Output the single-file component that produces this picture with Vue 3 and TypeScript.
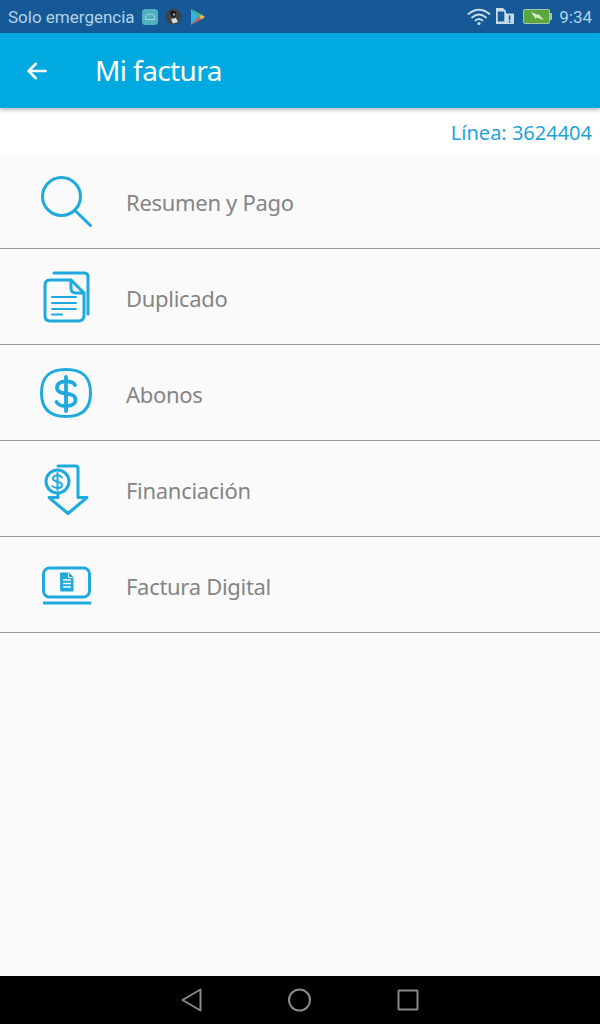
<script setup lang="ts">
const items: { key: string; label: string }[] = [
  { key: 'search', label: 'Resumen y Pago' },
  { key: 'copy', label: 'Duplicado' },
  { key: 'dollar', label: 'Abonos' },
  { key: 'finance', label: 'Financiación' },
  { key: 'digital', label: 'Factura Digital' },
]
</script>

<template>
  <div class="screen">
    <header class="status">
      <div class="status-left">
        <span class="status-text">Solo emergencia</span>
        <svg class="ic-a" width="16" height="16" viewBox="0 0 16 16">
          <rect width="16" height="16" rx="3.5" fill="#4fb0c0" />
          <path d="M3.5 10.5 V8.5 A4.5 3.5 0 0 1 12.5 8.5 V10.5 Z" fill="none" stroke="#a9d6df" stroke-width="1" />
        </svg>
        <svg class="ic-b" width="17" height="17" viewBox="0 0 17 17">
          <circle cx="8.5" cy="8.5" r="8" fill="#3c4248" />
          <path d="M5 4 Q8 1.5 11 4 L10.5 9 L7 9 Z" fill="#14171a" />
          <path d="M6 11 L11 10 L13 14 L8 15.5 Z" fill="#d9dcdf" />
          <circle cx="9" cy="6.5" r="1.2" fill="#9aa0a6" />
        </svg>
        <svg class="ic-c" width="14" height="16" viewBox="0 0 14 16">
          <path d="M0 0 L8 8 L0 16 Z" fill="#35b6d8" />
          <path d="M0 0 L10.5 5.6 L8 8 Z" fill="#4fb58a" />
          <path d="M0 16 L10.5 10.4 L8 8 Z" fill="#d9584f" />
          <path d="M10.5 5.6 L14 8 L10.5 10.4 L8 8 Z" fill="#e6b83c" />
        </svg>
      </div>
      <div class="status-right">
        <svg width="24" height="18" viewBox="0 0 24 18" fill="none" stroke="#c6dcec" stroke-width="1.8" stroke-linecap="round">
          <path d="M1.5 6 Q12 -2.5 22.5 6" />
          <path d="M5 9.5 Q12 3.5 19 9.5" />
          <path d="M8.5 12.5 Q12 9.5 15.5 12.5" />
          <circle cx="12" cy="15.5" r="1.6" fill="#c6dcec" stroke="none" />
        </svg>
        <svg width="18" height="17" viewBox="0 0 18 17">
          <path d="M0 0 H7 L10 3 V16 H0 Z" fill="#c6dcec" />
          <rect x="1.8" y="3.5" width="6.5" height="10" fill="#1a5c96" />
          <rect x="9" y="5.5" width="9" height="10.5" rx="1" fill="#c6dcec" />
          <rect x="12.8" y="7.4" width="1.6" height="4.8" fill="#1a5c96" />
          <rect x="12.8" y="13" width="1.6" height="1.6" fill="#1a5c96" />
        </svg>
        <svg class="batt" width="29" height="15" viewBox="0 0 29 15">
          <rect x="0.5" y="0.5" width="26" height="14" rx="1.5" fill="#59a83c" stroke="#a8c4b0" />
          <rect x="27" y="4" width="2" height="7" fill="#a8c4b0" />
          <path d="M8 3 L15 6 L15 4.5 L21 11 L13 8.5 L13 10.5 Z" fill="#d8e8d0" />
        </svg>
        <span class="status-text time">9:34</span>
      </div>
    </header>

    <div class="appbar">
      <svg class="back" width="24" height="24" viewBox="0 0 24 24" fill="none" stroke="#fff" stroke-width="3" stroke-linecap="round" stroke-linejoin="round">
        <path d="M22.5 12 H2.5 M11 3.5 L2.5 12 L11 20.5" transform="translate(1.5 1.8) scale(0.85)" />
      </svg>
      <h1 class="title">Mi factura</h1>
    </div>

    <div class="line-row">Línea: 3624404</div>

    <ul class="list">
      <li v-for="item in items" :key="item.key" class="row">
        <span class="icon-cell">
          <svg v-if="item.key === 'search'" width="54" height="54" viewBox="0 0 54 54" fill="none" stroke="#1fa9dc" stroke-width="3" stroke-linecap="round">
            <circle cx="21.5" cy="21.5" r="19" />
            <path d="M35.5 36 L50.5 50.5" />
          </svg>
          <svg v-else-if="item.key === 'copy'" width="54" height="54" viewBox="0 0 54 54" fill="none" stroke="#1fa9dc" stroke-width="3" stroke-linecap="round" stroke-linejoin="round">
            <path d="M14 2 H44 Q48 2 48 6 V43" />
            <path d="M10 9 H31 L44 22 V44 Q44 50 38 50 H10 Q5 50 5 45 V14 Q5 9 10 9 Z" />
            <path d="M31 9 V17 Q31 22 36 22 H44" />
            <path d="M12 26 H36 M12 32 H36 M12 38 H36" stroke-width="2" />
            <path d="M12 43.5 H22" stroke-width="2" />
          </svg>
          <svg v-else-if="item.key === 'dollar'" width="54" height="54" viewBox="0 0 54 54" fill="none" stroke="#1fa9dc" stroke-width="3">
            <path d="M26 2.5 C43 2.5 50.5 10 50.5 26 C50.5 41.5 43 49.5 26 49.5 C9 49.5 1.5 41.5 1.5 26 C1.5 10 9 2.5 26 2.5 Z" />
            <path d="M35 18 C33 13 17 12.5 17 20.5 C17 30 35.5 23 35.5 33 C35.5 41 19 40.5 16.5 35" stroke-width="3.8" stroke-linecap="round" />
            <path d="M26 10 V44" stroke-width="3.8" stroke-linecap="round" />
          </svg>
          <svg v-else-if="item.key === 'finance'" width="54" height="54" viewBox="0 0 54 54" fill="none" stroke="#1fa9dc" stroke-width="3" stroke-linecap="round" stroke-linejoin="round">
            <path d="M18 3 H36 Q38 3 38 5 V34.5 H47 L28 50.5 L9 34.5 H18 V30" />
            <circle cx="17.5" cy="18.5" r="11.5" fill="#fafafa" />
            <path d="M22 14.5 C20 11.5 13 11.5 13 15.5 C13 20 22 17.5 22 22 C22 26 14.5 25.5 12.5 23" stroke-width="2" />
            <path d="M17.5 10 V27" stroke-width="2" />
          </svg>
          <svg v-else width="54" height="54" viewBox="0 0 54 54" fill="none" stroke="#1fa9dc" stroke-linecap="round" stroke-linejoin="round">
            <rect x="3.5" y="9" width="46" height="29" rx="6" stroke-width="3" />
            <path d="M3 44 H51" stroke-width="3" stroke-linecap="butt" />
            <path d="M21 14 H29 L33 18 V32 H21 Z" fill="#1fa9dc" stroke-width="1" />
            <path d="M23.5 21 H30.5 M23.5 24.5 H30.5 M23.5 28 H30.5" stroke="#fafafa" stroke-width="1.3" />
            <path d="M28.5 14.5 V18.5 H32.5" stroke="#fafafa" stroke-width="1" />
          </svg>
        </span>
        <span class="label">{{ item.label }}</span>
      </li>
    </ul>

    <nav class="navbar">
      <svg class="nav-back" width="24" height="26" viewBox="0 0 24 26" fill="none" stroke="#8a8a8a" stroke-width="2" stroke-linejoin="round">
        <path d="M20.5 2.5 V23.5 L2.5 13 Z" />
      </svg>
      <svg width="26" height="26" viewBox="0 0 26 26" fill="none" stroke="#8a8a8a" stroke-width="2">
        <circle cx="12.5" cy="13" r="10.5" />
      </svg>
      <svg class="nav-square" width="24" height="24" viewBox="0 0 24 24" fill="none" stroke="#8a8a8a" stroke-width="2" stroke-linejoin="round">
        <rect x="2.5" y="2.5" width="19" height="19" rx="1" />
      </svg>
    </nav>
  </div>
</template>

<style>
html, body { margin: 0; padding: 0; }
</style>

<style scoped>
.screen {
  width: 600px;
  height: 1024px;
  display: flex;
  flex-direction: column;
  background: #fafafa;
  overflow: hidden;
  font-family: "Noto Sans", "Open Sans", sans-serif;
}
.status {
  height: 33px;
  flex: none;
  background: #155a96;
  display: flex;
  align-items: center;
  justify-content: space-between;
  padding: 0 8px;
}
.status-left, .status-right { display: flex; align-items: center; }
.status-text {
  font-family: Roboto, sans-serif;
  font-size: 17px;
  color: #b3d2e8;
}
.ic-a { margin-left: 7px; }
.ic-b { margin-left: 7px; }
.ic-c { margin-left: 9px; }
.status-right { gap: 5px; }
.batt { margin-left: 4px; }
.time { margin-left: 2px; }
.appbar {
  height: 75px;
  flex: none;
  background: #00a9e0;
  display: flex;
  align-items: center;
  box-shadow: 0 2px 4px rgba(0, 0, 0, 0.28);
  position: relative;
  z-index: 1;
}
.back { margin-left: 25px; }
.title {
  margin: -2px 0 0 46px;
  font-size: 28px;
  font-weight: 400;
  color: #fff;
  letter-spacing: -0.6px;
}
.line-row {
  height: 45px;
  flex: none;
  background: #fff;
  box-sizing: border-box;
  padding: 10px 8px 0 0;
  text-align: right;
  font-size: 20px;
  line-height: 30px;
  color: #1fa3da;
}
.list { list-style: none; margin: 0; padding: 0; }
.row {
  height: 96px;
  box-sizing: border-box;
  border-bottom: 1px solid #9a9a9a;
  display: flex;
  align-items: center;
}
.icon-cell {
  width: 54px;
  height: 54px;
  margin-left: 40px;
  flex: none;
  position: relative;
  top: 1px;
}
.icon-cell svg { display: block; }
.label {
  margin-left: 32px;
  padding-top: 2px;
  font-size: 22px;
  color: #858585;
  letter-spacing: -0.3px;
}
.navbar {
  margin-top: auto;
  height: 48px;
  flex: none;
  background: #000;
  display: grid;
  grid-template-columns: 24px 26px 24px;
  justify-content: center;
  column-gap: 84px;
  align-items: center;
}
.navbar svg { display: block; }
.nav-back { margin-left: 1px; }
.nav-square { margin-left: -1px; }
</style>
